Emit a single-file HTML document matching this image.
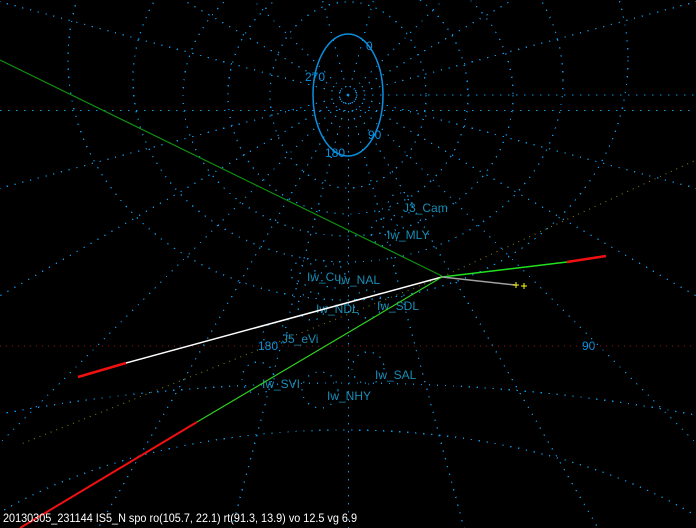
<!DOCTYPE html>
<html><head><meta charset="utf-8"><style>
html,body{margin:0;padding:0;background:#000;width:696px;height:528px;overflow:hidden}
svg{display:block;position:absolute;left:0;top:0}
text{font-family:"Liberation Sans",sans-serif}
</style></head><body>
<svg width="696" height="528" viewBox="0 0 696 528" xmlns="http://www.w3.org/2000/svg">
<rect width="696" height="528" fill="#000"/>
<g fill="none" stroke="#0a96e8" stroke-width="1.3" stroke-dasharray="1.3 6.7" shape-rendering="crispEdges">
  <line x1="0" y1="110.5" x2="696" y2="110.5"/>
  <line x1="348" y1="95" x2="1148" y2="95"/>
  <line x1="348" y1="95" x2="1121" y2="302"/>
  <line x1="348" y1="95" x2="1041" y2="495"/>
  <line x1="348" y1="95" x2="914" y2="661"/>
  <line x1="348" y1="95" x2="748" y2="788"/>
  <line x1="348" y1="95" x2="555" y2="868"/>
  <line x1="348.5" y1="95" x2="348.5" y2="895"/>
  <line x1="348" y1="95" x2="141" y2="868"/>
  <line x1="348" y1="95" x2="-52" y2="788"/>
  <line x1="348" y1="95" x2="-218" y2="661"/>
  <line x1="348" y1="95" x2="-345" y2="495"/>
  <line x1="348" y1="95" x2="-425" y2="302"/>
  <line x1="348" y1="95" x2="-425" y2="-112"/>
  <line x1="348" y1="95" x2="-345" y2="-305"/>
  <line x1="348" y1="95" x2="-218" y2="-471"/>
  <line x1="348" y1="95" x2="141" y2="-678"/>
  <line x1="348" y1="95" x2="555" y2="-678"/>
  <line x1="348" y1="95" x2="914" y2="-471"/>
  <line x1="348" y1="95" x2="1041" y2="-305"/>
  <line x1="348" y1="95" x2="1121" y2="-112"/>
  <ellipse cx="348" cy="95" rx="78" ry="93"/>
  <ellipse cx="348" cy="95" rx="120" ry="119"/>
  <ellipse cx="348" cy="95" rx="165" ry="141"/>
  <ellipse cx="348" cy="80" rx="215" ry="182"/>
  <ellipse cx="348" cy="60" rx="280" ry="240"/>
  <ellipse cx="345" cy="700" rx="480" ry="270"/>
  <ellipse cx="345" cy="700" rx="800" ry="317"/>
  <circle cx="400" cy="205" r="12"/>
  <circle cx="385" cy="232" r="14"/>
  <circle cx="303" cy="273" r="12"/>
  <circle cx="333" cy="276" r="12"/>
  <circle cx="312" cy="306" r="14"/>
  <circle cx="368" cy="304" r="14"/>
  <circle cx="275" cy="335" r="12"/>
  <circle cx="368" cy="368" r="16"/>
  <circle cx="258" cy="378" r="16"/>
  <circle cx="320" cy="390" r="18"/>
</g>
<ellipse cx="348" cy="95" rx="35" ry="61" fill="none" stroke="#0a8fe0" stroke-width="1.5"/>
<g fill="#0a8fe0" font-size="12">
  <text x="366" y="50">0</text>
  <text x="305" y="81">270</text>
  <text x="368" y="139">90</text>
  <text x="325" y="157">180</text>
  <text x="258" y="350">180</text>
  <text x="582" y="350">90</text>
</g>
<g fill="#1a8cb4" font-size="12">
  <text x="403" y="212">J3_Cam</text>
  <text x="387" y="239">Iw_MLY</text>
  <text x="307" y="281">Iw_Cu</text>
  <text x="338" y="284">Iw_NAL</text>
  <text x="316" y="313">Iw_NDL</text>
  <text x="377" y="310">Iw_SDL</text>
  <text x="282" y="343">J5_eVi</text>
  <text x="375" y="379">Iw_SAL</text>
  <text x="262" y="388">Iw_SVI</text>
  <text x="327" y="400">Iw_NHY</text>
</g>
<line x1="0" y1="346" x2="696" y2="346" stroke="#a01010" stroke-dasharray="1 5"/>
<g stroke="#8a8a10" stroke-dasharray="1 5" fill="none">
  <line x1="442" y1="277" x2="21" y2="444"/>
  <line x1="442" y1="277" x2="696" y2="160"/>
</g>
<line x1="0" y1="60" x2="442" y2="276" stroke="#109010" stroke-width="1.2"/>
<line x1="442" y1="277" x2="567" y2="262" stroke="#20e020" stroke-width="1.5"/>
<line x1="567" y1="262" x2="606" y2="256" stroke="#f01010" stroke-width="2.5"/>
<line x1="442" y1="277" x2="126" y2="363" stroke="#ffffff" stroke-width="1.5"/>
<line x1="126" y1="363" x2="78" y2="377" stroke="#f01010" stroke-width="2.5"/>
<line x1="442" y1="277" x2="515" y2="285" stroke="#a0a0a0" stroke-width="1.5"/>
<line x1="442" y1="277" x2="197" y2="422" stroke="#30d020" stroke-width="1.2"/>
<line x1="197" y1="422" x2="20" y2="528" stroke="#f01010" stroke-width="2"/>
<g stroke="#ffff20" stroke-width="1">
  <line x1="513" y1="285" x2="519" y2="285"/><line x1="516" y1="282" x2="516" y2="288"/>
  <line x1="521" y1="286" x2="527" y2="286"/><line x1="524" y1="283" x2="524" y2="289"/>
</g>
<text x="3" y="522" fill="#ffffff" font-size="12" textLength="354" lengthAdjust="spacingAndGlyphs">20130305_231144 IS5_N spo ro(105.7, 22.1) rt(91.3, 13.9) vo 12.5 vg 6.9</text>
</svg>
</body></html>
